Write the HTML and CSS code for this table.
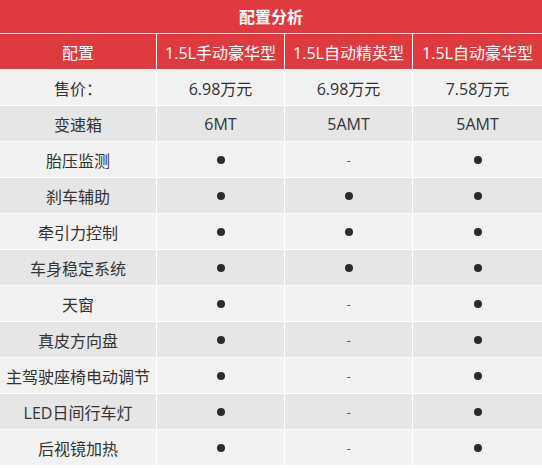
FILE: index.html
```html
<!DOCTYPE html>
<html lang="zh">
<head>
<meta charset="utf-8">
<title>配置分析</title>
<link rel="stylesheet" href="styles.css">
</head>
<body>
<div class="table">
  <div class="title">配置分析</div>
  <div class="cell head">配置</div>
  <div class="cell head">1.5L手动豪华型</div>
  <div class="cell head">1.5L自动精英型</div>
  <div class="cell head">1.5L自动豪华型</div>

  <div class="cell light">售价：</div>
  <div class="cell light">6.98万元</div>
  <div class="cell light">6.98万元</div>
  <div class="cell light">7.58万元</div>

  <div class="cell dark">变速箱</div>
  <div class="cell dark">6MT</div>
  <div class="cell dark">5AMT</div>
  <div class="cell dark">5AMT</div>

  <div class="cell light">胎压监测</div>
  <div class="cell light"><span class="dot"></span></div>
  <div class="cell light"><span class="dash">-</span></div>
  <div class="cell light"><span class="dot"></span></div>

  <div class="cell dark">刹车辅助</div>
  <div class="cell dark"><span class="dot"></span></div>
  <div class="cell dark"><span class="dot"></span></div>
  <div class="cell dark"><span class="dot"></span></div>

  <div class="cell light">牵引力控制</div>
  <div class="cell light"><span class="dot"></span></div>
  <div class="cell light"><span class="dot"></span></div>
  <div class="cell light"><span class="dot"></span></div>

  <div class="cell dark">车身稳定系统</div>
  <div class="cell dark"><span class="dot"></span></div>
  <div class="cell dark"><span class="dot"></span></div>
  <div class="cell dark"><span class="dot"></span></div>

  <div class="cell light">天窗</div>
  <div class="cell light"><span class="dot"></span></div>
  <div class="cell light"><span class="dash">-</span></div>
  <div class="cell light"><span class="dot"></span></div>

  <div class="cell dark">真皮方向盘</div>
  <div class="cell dark"><span class="dot"></span></div>
  <div class="cell dark"><span class="dash">-</span></div>
  <div class="cell dark"><span class="dot"></span></div>

  <div class="cell light">主驾驶座椅电动调节</div>
  <div class="cell light"><span class="dot"></span></div>
  <div class="cell light"><span class="dash">-</span></div>
  <div class="cell light"><span class="dot"></span></div>

  <div class="cell dark">LED日间行车灯</div>
  <div class="cell dark"><span class="dot"></span></div>
  <div class="cell dark"><span class="dash">-</span></div>
  <div class="cell dark"><span class="dot"></span></div>

  <div class="cell light">后视镜加热</div>
  <div class="cell light"><span class="dot"></span></div>
  <div class="cell light"><span class="dash">-</span></div>
  <div class="cell light"><span class="dot"></span></div>
</div>
</body>
</html>
```

FILE: styles.css
```css
html, body {
  margin: 0;
  padding: 0;
  background: #ffffff;
}

body {
  font-family: "Open Sans", "Noto Sans CJK SC", sans-serif;
  width: 542px;
  height: 468px;
  overflow: hidden;
}

.table {
  display: grid;
  grid-template-columns: 156px 127px 127px 129px;
  grid-template-rows: 33px repeat(12, 35px);
  gap: 1px;
  background: #ffffff;
}

.title {
  grid-column: 1 / -1;
  background: #df3b3f;
  color: #ffffff;
  font-weight: bold;
  font-size: 16px;
  display: flex;
  align-items: center;
  justify-content: center;
  padding-bottom: 1px;
}

.cell {
  display: flex;
  align-items: center;
  justify-content: center;
  font-size: 16px;
  color: #333333;
  white-space: nowrap;
}

.head {
  background: #df3b3f;
  color: #ffffff;
  font-size: 16px;
}

.light {
  background: #f2f2f2;
}

.dark {
  background: #e6e6e6;
}

.dot {
  width: 8px;
  height: 8px;
  border-radius: 50%;
  background: #2b2b2b;
}

.dash {
  color: #555555;
  font-size: 13px;
}
```
